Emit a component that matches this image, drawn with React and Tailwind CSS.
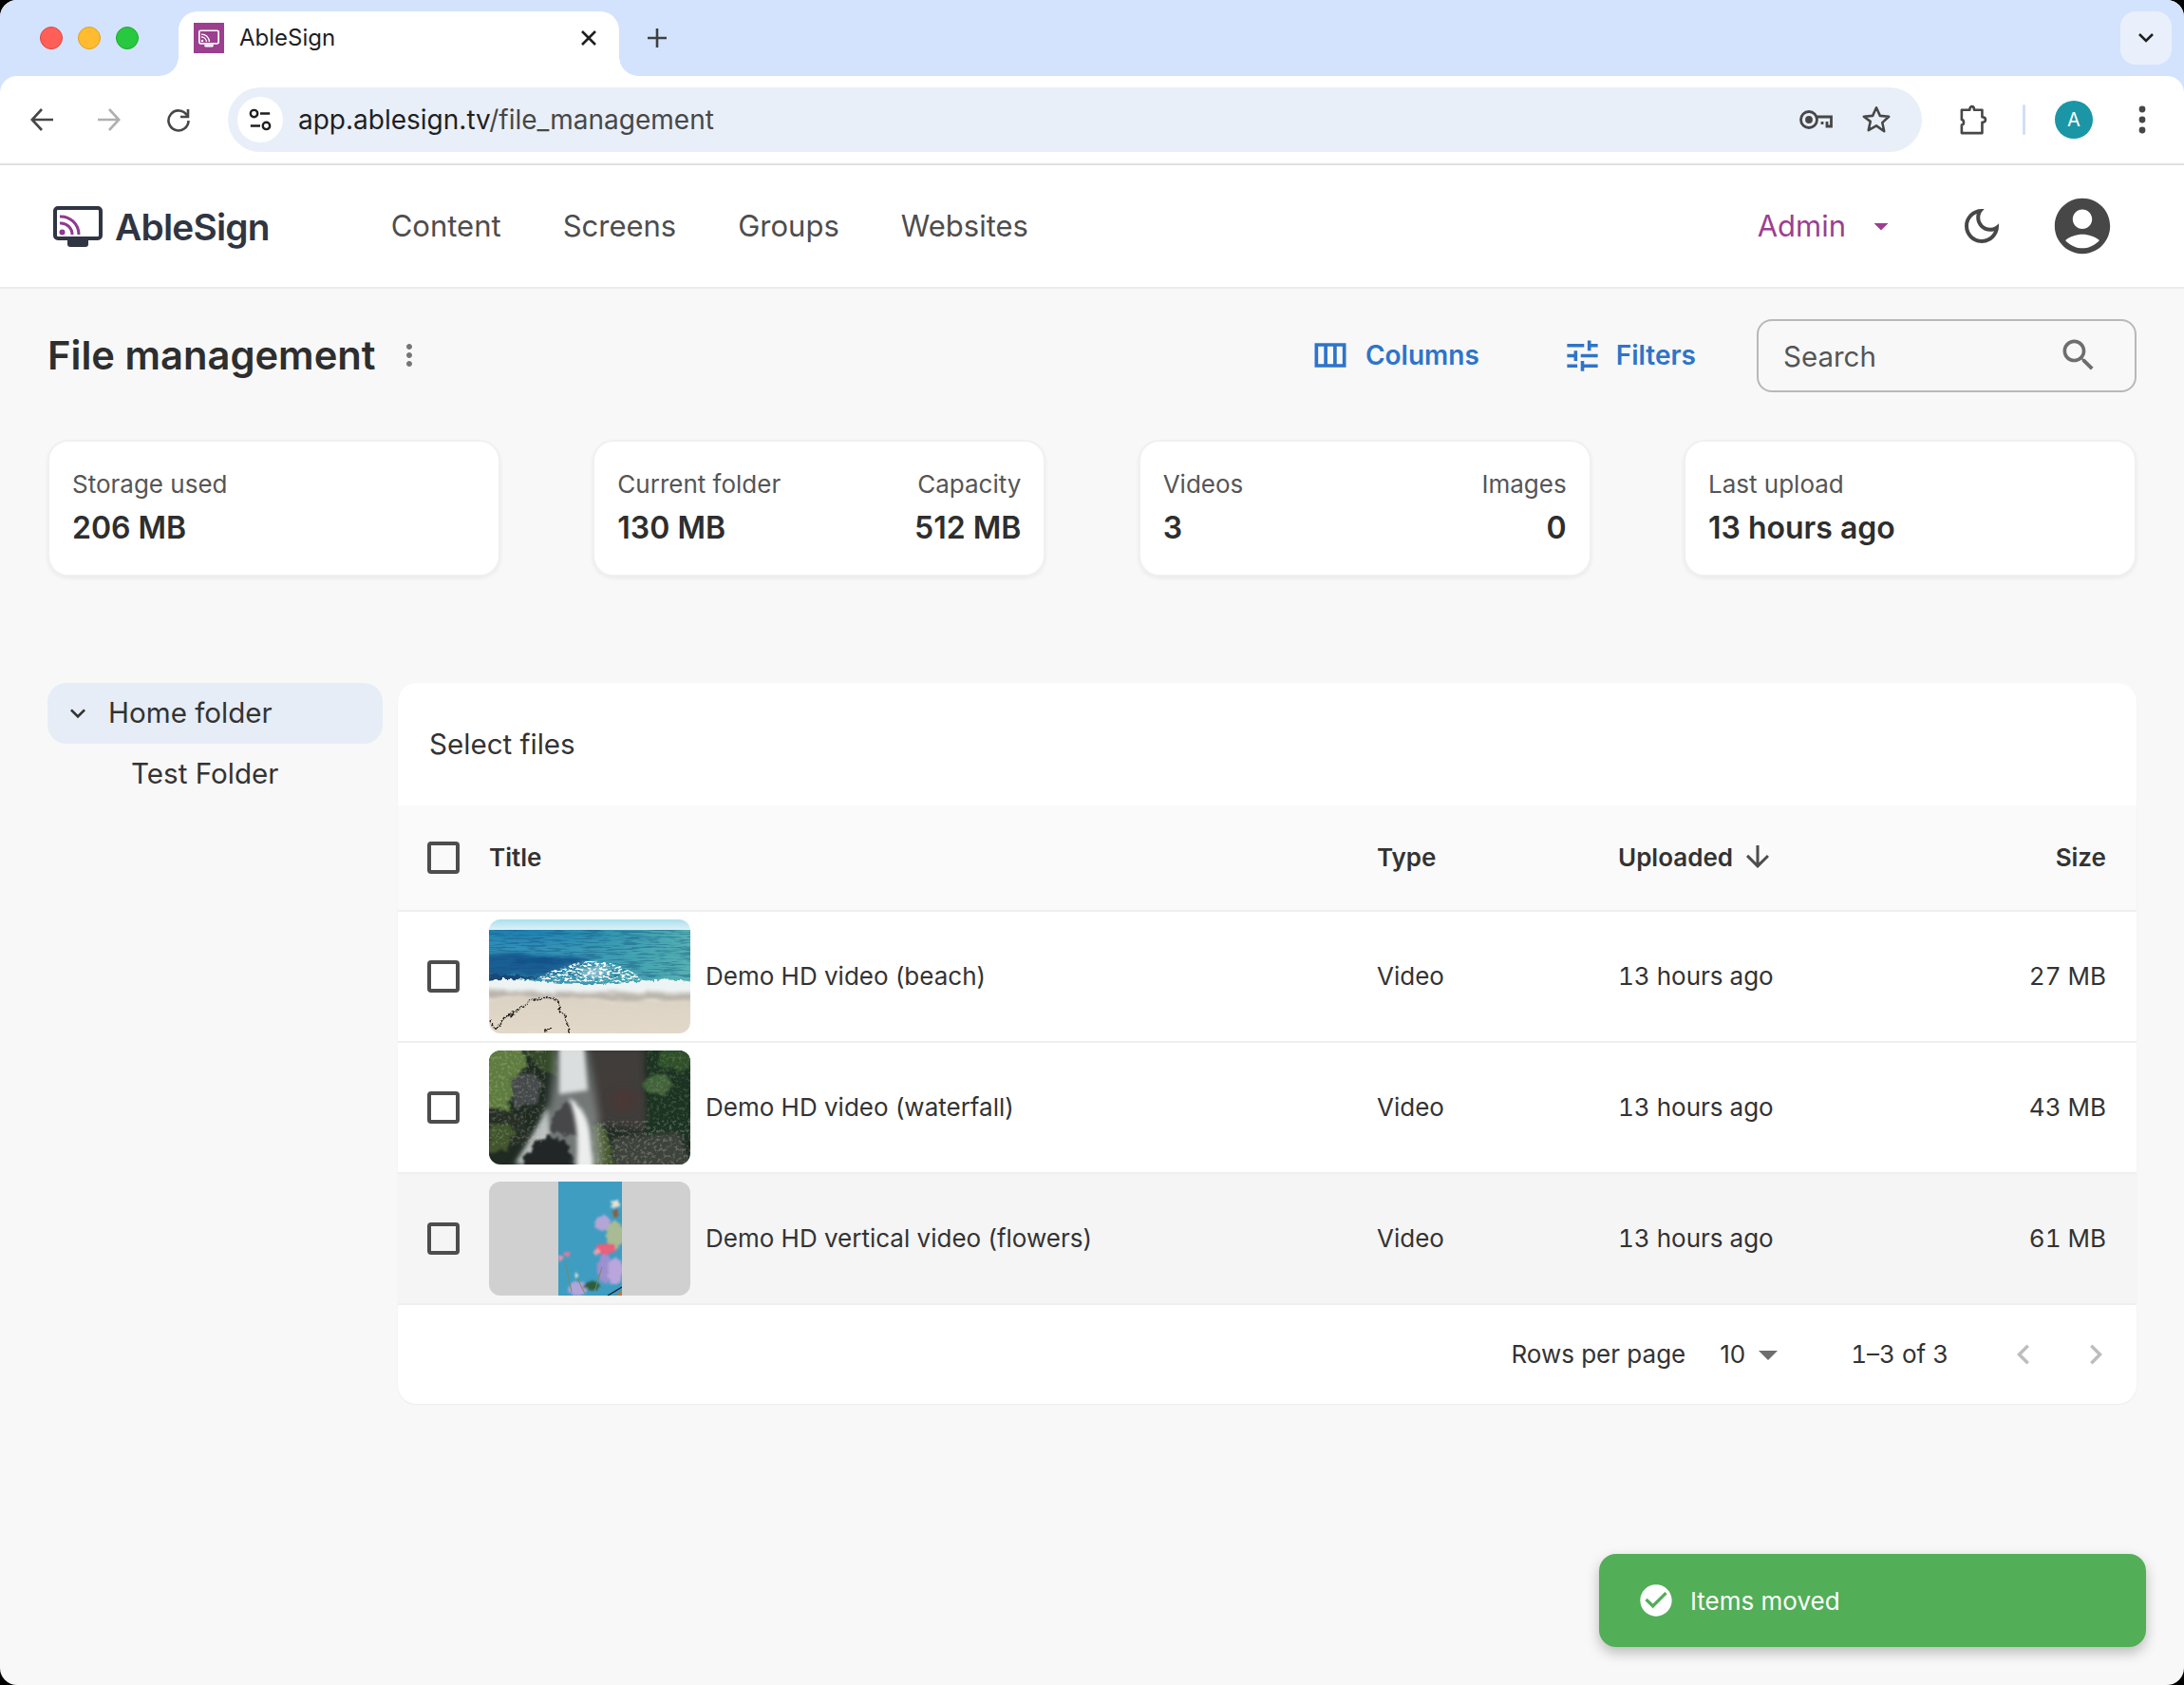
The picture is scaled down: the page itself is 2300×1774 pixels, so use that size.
import React from 'react';

const Mui = ({ d, className }) => (
  <svg viewBox="0 0 24 24" className={className} fill="currentColor">
    <path d={d} />
  </svg>
);

const ICONS = {
  columns: 'M3 5v14h18V5H3zm5.33 12H5V7h3.33v10zm5.34 0h-3.33V7h3.33v10zM19 17h-3.33V7H19v10z',
  tune: 'M3 17v2h6v-2H3zM3 5v2h10V5H3zm10 16v-2h8v-2h-8v-2h-2v6h2zM7 9v2H3v2h4v2h2V9H7zm14 4v-2H11v2h10zm-6-4h2V7h4V5h-4V3h-2v6z',
  search: 'M15.5 14h-.79l-.28-.27C15.41 12.59 16 11.11 16 9.5 16 5.91 13.09 3 9.5 3S3 5.91 3 9.5 5.91 16 9.5 16c1.61 0 3.09-.59 4.23-1.57l.27.28v.79l5 4.99L20.49 19l-4.99-5zm-6 0C7.01 14 5 11.99 5 9.5S7.01 5 9.5 5 14 7.01 14 9.5 11.99 14 9.5 14z',
  account: 'M12 2C6.48 2 2 6.48 2 12s4.48 10 10 10 10-4.48 10-10S17.52 2 12 2zm0 4c1.93 0 3.5 1.57 3.5 3.5S13.93 13 12 13s-3.5-1.57-3.5-3.5S10.07 6 12 6zm0 14c-2.03 0-4.43-.82-6.14-2.88C7.55 15.8 9.68 15 12 15s4.45.8 6.14 2.12C16.43 19.18 14.03 20 12 20z',
  moon: 'M9.37 5.51c-.18.64-.27 1.31-.27 1.99 0 4.08 3.32 7.4 7.4 7.4.68 0 1.35-.09 1.99-.27C17.45 17.19 14.93 19 12 19c-3.86 0-7-3.14-7-7 0-2.93 1.81-5.45 4.37-6.49zM12 3c-4.97 0-9 4.03-9 9s4.03 9 9 9 9-4.03 9-9c0-.46-.04-.92-.1-1.36-.98 1.37-2.58 2.26-4.4 2.26-2.98 0-5.4-2.42-5.4-5.4 0-1.81.89-3.42 2.26-4.4-.44-.06-.9-.1-1.36-.1z',
  more: 'M12 8c1.1 0 2-.9 2-2s-.9-2-2-2-2 .9-2 2 .9 2 2 2zm0 2c-1.1 0-2 .9-2 2s.9 2 2 2 2-.9 2-2-.9-2-2-2zm0 6c-1.1 0-2 .9-2 2s.9 2 2 2 2-.9 2-2-.9-2-2-2z',
  arrowDown: 'M20 12l-1.41-1.41L13 16.17V4h-2v12.17l-5.58-5.59L4 12l8 8 8-8z',
  drop: 'M7 10l5 5 5-5z',
  expand: 'M16.59 8.59 12 13.17 7.41 8.59 6 10l6 6 6-6z',
  left: 'M15.41 7.41 14 6l-6 6 6 6 1.41-1.41L10.83 12z',
  right: 'M10 6 8.59 7.41 13.17 12l-4.58 4.59L10 18l6-6z',
  check: 'M12 2C6.48 2 2 6.48 2 12s4.48 10 10 10 10-4.48 10-10S17.52 2 12 2zm-2 15l-5-5 1.41-1.41L10 14.17l7.59-7.59L19 8l-9 9z',
};

const CastScreen = ({ className, frame, wave }) => (
  <svg viewBox="0 0 52 43" className={className} fill="none">
    <rect x="2" y="2" width="48" height="32" rx="3" stroke={frame} strokeWidth="4" />
    <path d="M15 36h22v4a3 3 0 0 1-3 3H18a3 3 0 0 1-3-3z" fill={frame} />
    <circle cx="9.5" cy="27.5" r="3" fill={wave} />
    <path d="M7 18a12 12 0 0 1 13 12" stroke={wave} strokeWidth="3" />
    <path d="M7 11a19 19 0 0 1 20 19" stroke={wave} strokeWidth="3" />
  </svg>
);

// organic edges for the photo-like thumbnails
const Rough = ({ id, freq, scale, blur = 0.5, seed = 3 }) => (
  <filter id={id} x="-15%" y="-15%" width="130%" height="130%">
    <feTurbulence type="fractalNoise" baseFrequency={freq} numOctaves="3" seed={seed} result="n" />
    <feDisplacementMap in="SourceGraphic" in2="n" scale={scale} xChannelSelector="R" yChannelSelector="G" />
    <feGaussianBlur stdDeviation={blur} />
  </filter>
);

// keeps only the speckles of a shape, for foam and foliage
const Speckle = ({ id, freq, gain, cut, seed = 5, blur = 0.4 }) => (
  <filter id={id} x="0" y="0" width="100%" height="100%">
    <feTurbulence type="fractalNoise" baseFrequency={freq} numOctaves="3" seed={seed} />
    <feColorMatrix values={`0 0 0 0 0  0 0 0 0 0  0 0 0 0 0  ${gain} 0 0 0 ${cut}`} result="m" />
    <feComposite in="SourceGraphic" in2="m" operator="in" />
    <feGaussianBlur stdDeviation={blur} />
  </filter>
);

function BeachThumb() {
  return (
    <svg viewBox="0 0 212 120" className="block w-full h-full" preserveAspectRatio="none">
      <defs>
        <linearGradient id="sky" x1="0" y1="0" x2="0" y2="1">
          <stop offset="0" stopColor="#a9e0ee" />
          <stop offset="1" stopColor="#e4f2f6" />
        </linearGradient>
        <linearGradient id="sea" x1="0" y1="0" x2="0" y2="1">
          <stop offset="0" stopColor="#1f80b0" />
          <stop offset="0.35" stopColor="#3391b8" />
          <stop offset="1" stopColor="#3a93b0" />
        </linearGradient>
        <linearGradient id="teal" x1="0" y1="0" x2="1" y2="0">
          <stop offset="0" stopColor="#3aa3a8" stopOpacity="0" />
          <stop offset="1" stopColor="#5ab5b2" stopOpacity="0.9" />
        </linearGradient>
        <linearGradient id="sand" x1="0" y1="0" x2="0" y2="1">
          <stop offset="0" stopColor="#dbd2c3" />
          <stop offset="1" stopColor="#e4dacb" />
        </linearGradient>
        <Rough id="beachSoft" freq="0.05 0.2" scale="10" blur="2" />
        <Rough id="beachEdge" freq="0.2" scale="6" blur="0.6" />
        <Speckle id="beachFoam" freq="0.25 0.5" gain="6" cut="-2.8" blur="0.5" />
        <Speckle id="beachRipple" freq="0.05 0.55" gain="5" cut="-2.3" seed="8" blur="0.5" />
      </defs>
      <rect width="212" height="12" fill="url(#sky)" />
      <rect y="11" width="212" height="58" fill="url(#sea)" />
      <rect x="50" y="11" width="162" height="58" fill="url(#teal)" />
      <path d="M-4 38C30 34 70 38 110 42c-14 4-26 8-44 14s-50 4-70 4z" fill="#17568f" opacity="0.85" filter="url(#beachSoft)" />
      <path d="M26 42c20-2 36-1 52 0-10 3-36 5-52 2z" fill="#0f3f7e" opacity="0.7" filter="url(#beachSoft)" />
      <rect y="11" width="212" height="50" fill="#12507f" filter="url(#beachRipple)" opacity="0.4" />
      <path d="M-2 58c30 0 40 2 60 4l-58 2z" fill="#1b4674" filter="url(#beachEdge)" />
      <path d="M50 62C72 50 98 42 116 44s30 8 40 14 0 8-20 8-72 0-86-4z" fill="#ffffff" filter="url(#beachFoam)" />
      <path d="M96 54c10-4 20-6 28-3s6 7-6 9-18-1-22-6z" fill="#f3f8f9" opacity="0.45" filter="url(#beachSoft)" />
      <path d="M-4 64c40-4 80 6 120 4s70-8 100-2v12C160 80 110 78 70 78S20 76-4 74z" fill="#eef4f4" filter="url(#beachEdge)" />
      <path d="M-4 72C50 80 120 76 216 78v10L-4 84z" fill="#b9b3aa" filter="url(#beachSoft)" />
      <path d="M-4 83C60 79 120 86 216 85v40H-4z" fill="url(#sand)" filter="url(#beachSoft)" />
      <path d="M1 106l5 9 5-4 6-9 8-2 7-7 6-2 8-8 6 2 8-3 9 1 4 5 1 6 6 8 3 9 1 9M58 118l8-4" fill="none" stroke="#26221c" strokeWidth="2" strokeDasharray="2.4 1" filter="url(#beachEdge)" />
    </svg>
  );
}

function WaterfallThumb() {
  return (
    <svg viewBox="0 0 212 120" className="block w-full h-full" preserveAspectRatio="none">
      <defs>
        <filter id="wfBlur" x="-30%" y="-30%" width="160%" height="160%"><feGaussianBlur stdDeviation="4" /></filter>
        <filter id="wfMist" x="-30%" y="-30%" width="160%" height="160%"><feGaussianBlur stdDeviation="2" /></filter>
        <Rough id="wfRough" freq="0.12" scale="12" blur="1.2" />
        <Speckle id="wfLeaves" freq="0.3" gain="5" cut="-2.5" blur="0.5" />
      </defs>
      <rect width="212" height="120" fill="#1f2a22" />
      <path d="M-4-4h38l8 18-14 14-6 36-26 10z" fill="#5f7c40" filter="url(#wfRough)" />
      <path d="M34-4h36l2 30-20-6z" fill="#36482c" filter="url(#wfRough)" />
      <path d="M106-4h58l4 90-60-10z" fill="#3f3d3b" filter="url(#wfBlur)" />
      <ellipse cx="142" cy="52" rx="14" ry="12" fill="#4a3934" filter="url(#wfBlur)" />
      <path d="M166-4h50v100h-50z" fill="#1f3320" filter="url(#wfRough)" />
      <ellipse cx="178" cy="36" rx="14" ry="11" fill="#43623a" filter="url(#wfRough)" />
      <ellipse cx="196" cy="10" rx="18" ry="12" fill="#2f4f2b" filter="url(#wfRough)" />
      <path d="M130 92l70-6 14 38h-84z" fill="#3c423a" filter="url(#wfMist)" />
      <path d="M24 30c8-8 26-8 32 2l-4 24-26 4z" fill="#45484b" filter="url(#wfRough)" />
      <path d="M-4 62l40 4 12 30-52 18z" fill="#252e25" filter="url(#wfRough)" />
      <path d="M0 80c10-6 20-4 26 4l-6 20-20 2z" fill="#43562e" filter="url(#wfRough)" />
      <path d="M110 78l14 2 6 44h-22z" fill="#46592f" filter="url(#wfRough)" />
      <path d="M70-4h34l6 40 6 40 4 48H26l22-34 16-36 4-30z" fill="#a9adaf" opacity="0.6" filter="url(#wfBlur)" />
      <path d="M74-4h26l4 46-30 4z" fill="#e6e9ea" opacity="0.9" filter="url(#wfMist)" />
      <path d="M62 60C52 78 42 96 28 118l12 2 24-30z" fill="#d7dadb" opacity="0.75" filter="url(#wfMist)" />
      <path d="M64 86c2-18 14-34 26-32 6 8 8 22 8 36z" fill="#46464a" filter="url(#wfRough)" />
      <path d="M84 50c12 6 20 20 22 36l4 38H92c2-24 2-50-8-74z" fill="#eceeee" filter="url(#wfMist)" />
      <path d="M36 124c2-14 8-28 24-32l22 2 6 30z" fill="#232526" filter="url(#wfRough)" />
      <rect x="0" y="0" width="60" height="100" fill="#d2dbba" filter="url(#wfLeaves)" opacity="0.2" />
      <rect x="114" y="74" width="98" height="46" fill="#c4c9ba" filter="url(#wfLeaves)" opacity="0.28" />
      <rect x="166" y="0" width="46" height="74" fill="#a5bb90" filter="url(#wfLeaves)" opacity="0.2" />
    </svg>
  );
}

function FlowerThumb() {
  return (
    <div className="flex justify-center w-full h-full bg-[#d0d0d0]">
      <svg viewBox="0 0 67 120" className="block w-[67px] h-full" preserveAspectRatio="none">
        <defs>
          <Rough id="flRough" freq="0.2" scale="7" blur="1" />
        </defs>
        <rect width="67" height="120" fill="#3f9dc2" />
        <g filter="url(#flRough)">
          <ellipse cx="47" cy="44" rx="8" ry="8" fill="#b3a6d4" />
          <ellipse cx="60" cy="56" rx="9" ry="14" fill="#a9bb93" />
          <ellipse cx="60" cy="24" rx="5" ry="4" fill="#e6e0d6" />
          <circle cx="60" cy="33" r="3.5" fill="#8a5f3c" />
          <ellipse cx="49" cy="92" rx="8" ry="16" fill="#9d90cf" />
          <ellipse cx="60" cy="94" rx="8" ry="14" fill="#b8a6dc" />
          <ellipse cx="20" cy="113" rx="10" ry="7" fill="#b2a4d8" />
          <ellipse cx="36" cy="110" rx="8" ry="5" fill="#2f5d3e" />
          <ellipse cx="50" cy="71" rx="10" ry="6" fill="#e8607c" />
          <circle cx="41" cy="74" r="3" fill="#eea0ae" />
          <circle cx="9" cy="77" r="3" fill="#e8789a" />
          <circle cx="2" cy="81" r="3" fill="#ef93ad" />
          <circle cx="19" cy="99" r="2.4" fill="#dfe3cf" />
        </g>
        <path d="M7 84L14 116M20 102L28 118M46 90L38 116" stroke="#7a8b5a" strokeWidth="1" fill="none" />
        <path d="M52 120L67 111" stroke="#20242a" strokeWidth="1.4" />
        <path d="M60 120l7-5v5z" fill="#b77a4a" />
      </svg>
    </div>
  );
}

const ROWS = [
  { title: 'Demo HD video (beach)', size: '27 MB', Thumb: BeachThumb },
  { title: 'Demo HD video (waterfall)', size: '43 MB', Thumb: WaterfallThumb },
  { title: 'Demo HD vertical video (flowers)', size: '61 MB', Thumb: FlowerThumb, hover: true },
];

const Checkbox = () => (
  <span className="block w-[34px] h-[34px] ml-[31px] rounded-[4px] border-[4px] border-[#4d4d4d]" />
);

function StatCard({ left, right }) {
  return (
    <div className="flex justify-between w-[477px] h-[144px] px-[24px] pt-[28px] bg-white rounded-[22px] border-2 border-[#f0f0f0] shadow-[0_2px_4px_rgba(0,0,0,0.06)]">
      <div>
        <div className="text-[26px] leading-[34px] text-[#555]">{left[0]}</div>
        <div className="mt-[11px] text-[32px] leading-[36px] font-semibold text-[#2e2e2e]">{left[1]}</div>
      </div>
      {right && (
        <div className="text-right">
          <div className="text-[26px] leading-[34px] text-[#555]">{right[0]}</div>
          <div className="mt-[11px] text-[32px] leading-[36px] font-semibold text-[#2e2e2e]">{right[1]}</div>
        </div>
      )}
    </div>
  );
}

function BrowserChrome() {
  return (
    <div className="bg-[#d3e3fd]">
      {/* tab strip */}
      <div className="relative flex items-end h-[80px]">
        <div className="flex items-center gap-[16px] w-[188px] h-[80px] pl-[42px]">
          <span className="w-[24px] h-[24px] rounded-full bg-[#ff5f57] border border-[#e0443e]" />
          <span className="w-[24px] h-[24px] rounded-full bg-[#febc2e] border border-[#dea123]" />
          <span className="w-[24px] h-[24px] rounded-full bg-[#28c840] border border-[#1aab29]" />
        </div>
        <div className="relative flex items-center w-[464px] h-[68px] pl-[16px] pr-[23px] pb-[12px] bg-white rounded-t-[20px]">
          <span className="absolute -left-[20px] bottom-0 w-[20px] h-[20px] bg-[radial-gradient(circle_at_0_0,transparent_19.5px,white_20px)]" />
          <span className="absolute -right-[20px] bottom-0 w-[20px] h-[20px] bg-[radial-gradient(circle_at_100%_0,transparent_19.5px,white_20px)]" />
          <span className="flex items-center justify-center w-[32px] h-[32px] bg-[#9c3f8f]">
            <CastScreen className="w-[22px] h-[19px]" frame="#fff" wave="#fff" />
          </span>
          <span className="ml-[16px] text-[24px] leading-none text-[#1f1f1f]">AbleSign</span>
          <svg viewBox="0 0 18 18" className="ml-auto w-[18px] h-[18px]" stroke="#1f1f1f" strokeWidth="2.6" fill="none">
            <path d="M2 2l14 14M16 2L2 16" />
          </svg>
        </div>
        <svg viewBox="0 0 22 22" className="ml-[29px] mb-[29px] w-[22px] h-[22px]" stroke="#3c4043" strokeWidth="2.6" fill="none">
          <path d="M11 1v20M1 11h20" />
        </svg>
        <div className="flex items-center justify-center w-[54px] h-[56px] ml-auto mr-[13px] mb-[12px] bg-[#e9f0fc] rounded-[16px]">
          <svg viewBox="0 0 16 10" className="w-[16px] h-[10px]" stroke="#1f1f1f" strokeWidth="2.6" fill="none">
            <path d="M1 1l7 7 7-7" />
          </svg>
        </div>
      </div>
      {/* toolbar */}
      <div className="flex items-center h-[92px] bg-white rounded-t-[18px] text-[#474747]">
        <svg viewBox="0 0 24 24" className="ml-[32px] w-[24px] h-[24px]" stroke="currentColor" strokeWidth="2.6" fill="none">
          <path d="M24 12H2M12 1L1.8 12 12 23" />
        </svg>
        <svg viewBox="0 0 24 24" className="ml-[47px] w-[24px] h-[24px]" stroke="#b0b0b0" strokeWidth="2.6" fill="none">
          <path d="M0 12h22M12 1l10.2 11L12 23" />
        </svg>
        <svg viewBox="0 0 26 26" className="ml-[48px] w-[26px] h-[26px]" stroke="currentColor" strokeWidth="2.6" fill="none">
          <path d="M22 8.5A10.5 10.5 0 1 0 23.5 14" />
          <path d="M23 2v8h-8" />
        </svg>
        <div className="flex items-center w-[1784px] h-[68px] ml-[39px] pl-[10px] pr-[32px] bg-[#e9eff9] rounded-full">
          <span className="flex items-center justify-center w-[48px] h-[48px] bg-white rounded-full">
            <svg viewBox="0 0 26 28" className="w-[24px] h-[26px]" stroke="#1f1f1f" strokeWidth="2.6" fill="none">
              <circle cx="6" cy="7" r="4" />
              <path d="M13 7h11M2 21h11" />
              <circle cx="20" cy="21" r="4" />
            </svg>
          </span>
          <span className="ml-[16px] text-[28px] leading-none text-[#1f1f1f]">
            app.ablesign.tv<span className="text-[#474747]">/file_management</span>
          </span>
          <svg viewBox="0 0 36 24" className="ml-auto w-[36px] h-[24px]" stroke="currentColor" strokeWidth="2.8" fill="none">
            <circle cx="11" cy="12" r="8.5" />
            <circle cx="11" cy="12" r="2.5" fill="currentColor" />
            <path d="M19.5 9H34.5V19H30V14M25 14v3" />
          </svg>
          <svg viewBox="0 0 24 24" className="ml-[30px] w-[32px] h-[32px]" stroke="currentColor" strokeWidth="1.9" fill="none" strokeLinejoin="round">
            <path d="M12 2.5l2.9 6.4 7 .7-5.2 4.7 1.5 6.9L12 16.8l-6.2 3.5 1.5-6.9L2.100 9.600l7-.7z" />
          </svg>
        </div>
        <svg viewBox="0 0 32 34" className="ml-[40px] w-[30px] h-[32px]" stroke="currentColor" strokeWidth="2.8" fill="none" strokeLinejoin="round">
          <path d="M2 6h9c0-5 5-5 5 0h9v8c5 0 5 6 0 6v12H2v-9c3 0 3-6 0-6z" />
        </svg>
        <span className="ml-[36px] w-[3px] h-[32px] bg-[#cfdff5] rounded-full" />
        <span className="flex items-center justify-center ml-[31px] w-[40px] h-[40px] rounded-full bg-[#1a96a6] text-[20px] text-white">A</span>
        <svg viewBox="0 0 8 32" className="ml-[48px] w-[8px] h-[32px]" fill="currentColor">
          <circle cx="4" cy="5" r="3.4" />
          <circle cx="4" cy="16" r="3.4" />
          <circle cx="4" cy="27" r="3.4" />
        </svg>
      </div>
      <div className="h-[2px] bg-[#e0e0e0]" />
    </div>
  );
}

function AppHeader() {
  return (
    <header className="flex items-center h-[130px] pl-[56px] pr-[72px] bg-white border-b-2 border-[#ececec]">
      <CastScreen className="w-[52px] h-[43px]" frame="#2f3542" wave="#8e3a8f" />
      <span className="ml-[13px] pt-[2px] text-[38.8px] font-semibold tracking-[-0.02em] text-[#2f3542]">AbleSign</span>
      <nav className="flex gap-[65px] ml-[128px] text-[31px] text-[#4d4d4d]">
        <span>Content</span>
        <span>Screens</span>
        <span>Groups</span>
        <span>Websites</span>
      </nav>
      <span className="ml-auto text-[31px] text-[#9c3f8f]">Admin</span>
      <Mui d={ICONS.drop} className="ml-[19px] w-[36px] h-[36px] text-[#9c3f8f]" />
      <Mui d={ICONS.moon} className="ml-[64px] w-[48px] h-[48px] text-[#474747]" />
      <Mui d={ICONS.account} className="ml-[47px] w-[70px] h-[70px] text-[#474747]" />
    </header>
  );
}

function FileTable() {
  return (
    <section className="flex-1 h-[759px] bg-white rounded-[20px] overflow-hidden shadow-[0_1px_2px_rgba(0,0,0,0.05)]">
      <div className="flex items-center h-[129px] pl-[33px] text-[29.6px] text-[#333]">Select files</div>
      <div className="grid grid-cols-[96px_935px_254px_1fr_auto] items-center h-[112px] pr-[32px] bg-[#fafafa] border-b-2 border-[#efefef] text-[26px] font-semibold text-[#333]">
        <Checkbox />
        <span className="mb-[2px]">Title</span>
        <span className="mb-[2px]">Type</span>
        <span className="flex items-center gap-[8px] mb-[2px]">
          Uploaded
          <Mui d={ICONS.arrowDown} className="w-[36px] h-[36px] text-[#4d4d4d]" />
        </span>
        <span className="mb-[2px]">Size</span>
      </div>
      {ROWS.map(({ title, size, Thumb, hover }) => (
        <div
          key={title}
          className={`grid grid-cols-[96px_935px_254px_1fr_auto] items-center h-[138px] pr-[32px] border-b-2 border-[#efefef] text-[26px] text-[#333] ${hover ? 'bg-[#f5f5f5]' : 'bg-white'}`}
        >
          <Checkbox />
          <div className="flex items-center gap-[16px]">
            <div className="w-[212px] h-[120px] rounded-[12px] overflow-hidden">
              <Thumb />
            </div>
            <span className="mb-[2px]">{title}</span>
          </div>
          <span className="mb-[2px]">Video</span>
          <span className="mb-[2px] tabular-nums">13 hours ago</span>
          <span className="mb-[2px] tabular-nums">{size}</span>
        </div>
      ))}
      <div className="flex items-center h-[103px] pr-[22px] text-[26px] text-[#333]">
        <span className="ml-auto">Rows per page</span>
        <span className="ml-[36px]">10</span>
        <Mui d={ICONS.drop} className="w-[48px] h-[48px] text-[#6d6d6d]" />
        <span className="ml-[63px] tabular-nums">1–3 of 3</span>
        <Mui d={ICONS.left} className="ml-[58px] w-[42px] h-[42px] text-[#bdbdbd]" />
        <Mui d={ICONS.right} className="ml-[34px] w-[42px] h-[42px] text-[#bdbdbd]" />
      </div>
    </section>
  );
}

export default function App() {
  return (
    <div className="h-[1774px] bg-black [font-family:Inter,sans-serif]">
      <div className="relative flex flex-col h-full rounded-[18px] overflow-hidden bg-[#f8f8f8]">
        <BrowserChrome />
        <AppHeader />
        <main className="pl-[50px] pr-[50px] pt-[32px]">
          <div className="flex items-center h-[76px]">
            <h1 className="text-[41.7px] font-semibold text-[#2e2e2e]">File management</h1>
            <Mui d={ICONS.more} className="ml-[17px] w-[36px] h-[36px] text-[#757575]" />
            <button className="flex items-center gap-[15px] ml-auto text-[28px] font-semibold text-[#2e74c9]">
              <Mui d={ICONS.columns} className="w-[44px] h-[44px]" />
              Columns
            </button>
            <button className="flex items-center gap-[14px] ml-[87px] text-[28px] font-semibold text-[#2e74c9]">
              <Mui d={ICONS.tune} className="w-[43px] h-[43px]" />
              Filters
            </button>
            <div className="flex items-center w-[400px] h-[77px] ml-[64px] pl-[26px] pr-[37px] border-2 border-[#b8b8b8] rounded-[16px]">
              <span className="pt-[2px] text-[29.5px] text-[#555]">Search</span>
              <Mui d={ICONS.search} className="ml-auto w-[44px] h-[44px] text-[#6e6e6e]" />
            </div>
          </div>
          <div className="flex justify-between mt-[51px]">
            <StatCard left={['Storage used', '206 MB']} />
            <StatCard left={['Current folder', '130 MB']} right={['Capacity', '512 MB']} />
            <StatCard left={['Videos', '3']} right={['Images', '0']} />
            <StatCard left={['Last upload', '13 hours ago']} />
          </div>
          <div className="flex gap-[16px] mt-[112px]">
            <aside className="w-[353px] text-[29.6px] text-[#333]">
              <div className="flex items-center h-[64px] pb-[1px] pl-[16px] bg-[#e6edf6] rounded-[20px]">
                <Mui d={ICONS.expand} className="w-[32px] h-[32px]" />
                <span className="ml-[16px]">Home folder</span>
              </div>
              <div className="flex items-center h-[64px] pb-[1px] pl-[88px]">Test Folder</div>
            </aside>
            <FileTable />
          </div>
        </main>
        <div className="absolute left-[1684px] top-[1636px] flex items-center w-[576px] h-[98px] pl-[40px] bg-[#52ae57] rounded-[18px] shadow-[0_6px_14px_rgba(0,0,0,0.25)] text-[26px] text-white">
          <Mui d={ICONS.check} className="w-[40px] h-[40px]" />
          <span className="ml-[16px]">Items moved</span>
        </div>
      </div>
    </div>
  );
}
